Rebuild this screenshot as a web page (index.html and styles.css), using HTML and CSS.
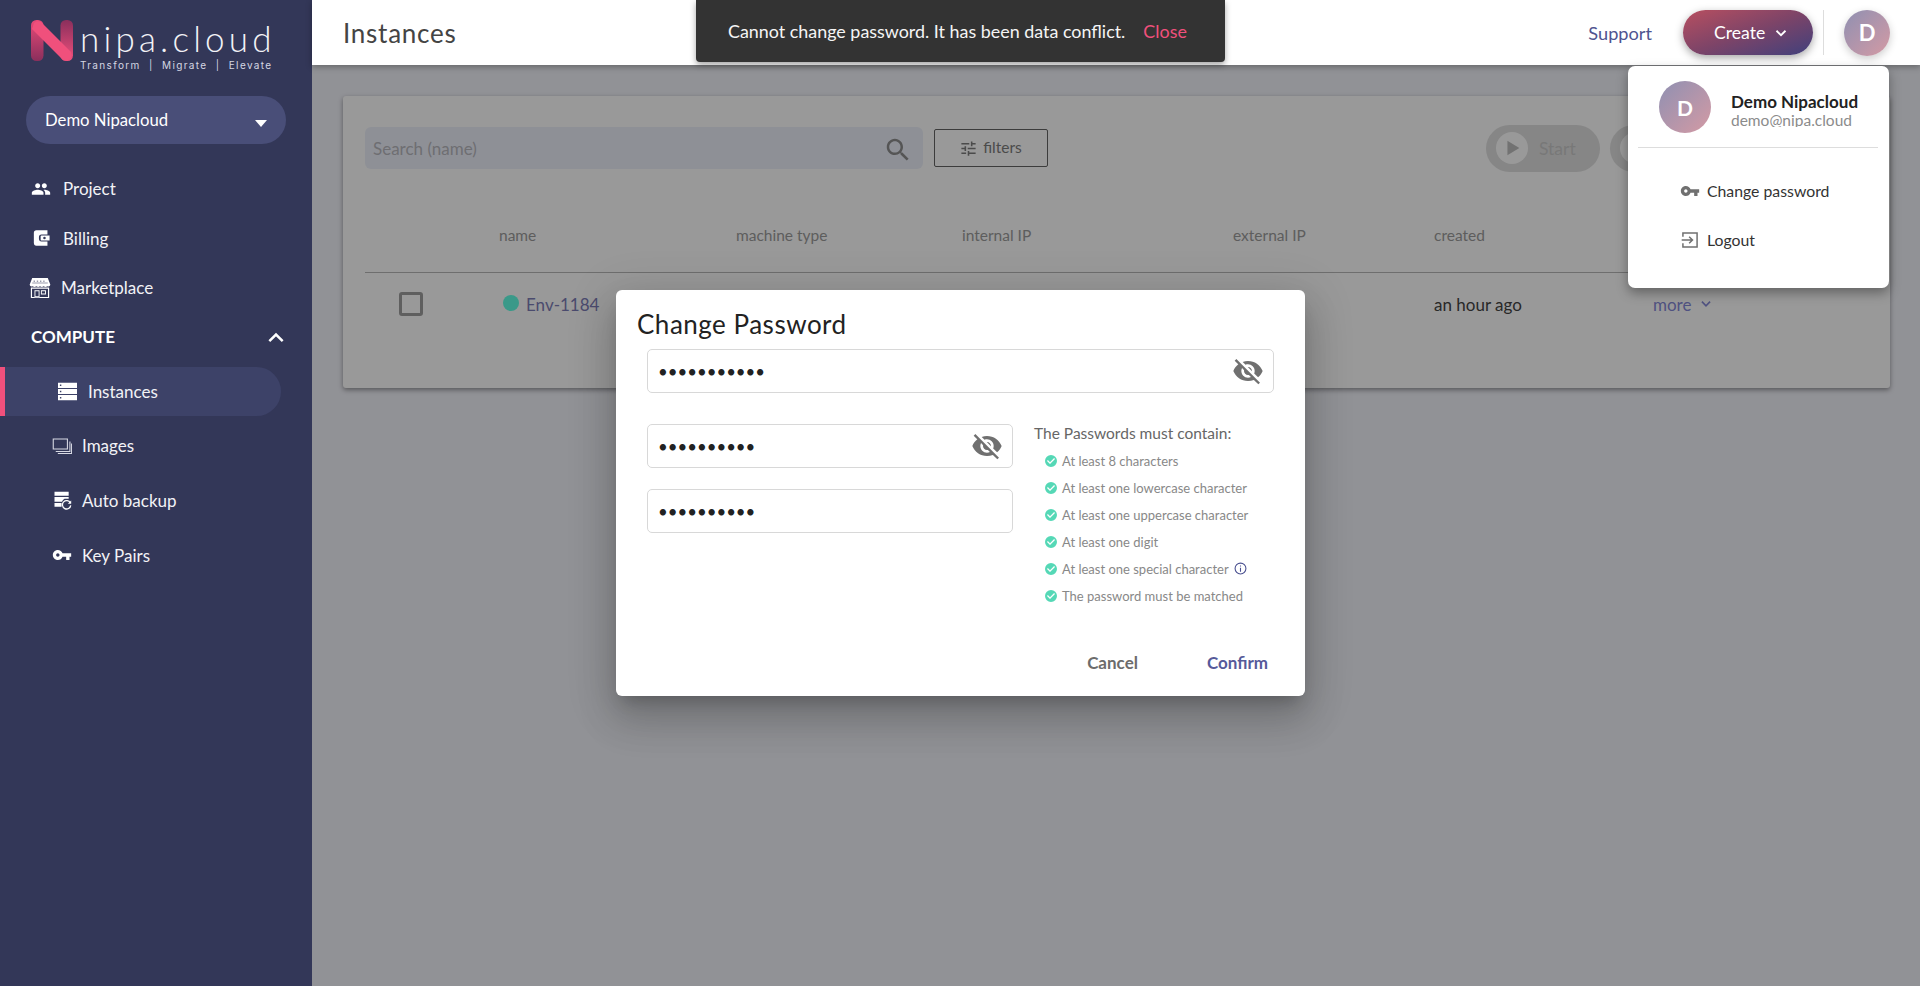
FILE: index.html
```html
<!DOCTYPE html>
<html lang="en">
<head>
<meta charset="utf-8">
<title>Instances - Nipa.Cloud</title>
<link rel="stylesheet" href="styles.css">
</head>
<body>
<div class="app">
  <aside class="sidebar">
    <div class="logo">
      <svg class="logo-mark" viewBox="0 0 42 41" width="42" height="41">
        <defs>
          <linearGradient id="nl" x1="0" y1="0" x2="0" y2="1"><stop offset="0" stop-color="#e94a78"/><stop offset="1" stop-color="#8a2f5c"/></linearGradient>
          <linearGradient id="nr" x1="0" y1="0" x2="0" y2="1"><stop offset="0" stop-color="#8a2f5c"/><stop offset="1" stop-color="#f0507c"/></linearGradient>
        </defs>
        <rect x="0" y="0" width="12.5" height="41" rx="5.5" fill="url(#nl)"/>
        <rect x="29.5" y="0" width="12.5" height="41" rx="5.5" fill="url(#nr)"/>
        <path d="M3 3 Q6 0 10 2 L40 32 Q42 38 37 40 Q33 41 30 38 L1 9 Z" fill="#f0507c"/>
      </svg>
      <div class="logo-text">
        <div class="logo-name">nipa.cloud</div>
        <div class="logo-tag">Transform &nbsp;|&nbsp; Migrate &nbsp;|&nbsp; Elevate</div>
      </div>
    </div>
    <div class="org-select"><span>Demo Nipacloud</span><i class="caret"></i></div>
    <nav class="nav">
      <a class="nav-item nav-project"><svg class="ic" viewBox="0 0 24 24"><path d="M16 11c1.66 0 2.99-1.34 2.99-3S17.66 5 16 5c-1.66 0-3 1.34-3 3s1.34 3 3 3zm-8 0c1.66 0 2.99-1.34 2.99-3S9.66 5 8 5C6.34 5 5 6.34 5 8s1.34 3 3 3zm0 2c-2.33 0-7 1.17-7 3.5V19h14v-2.5c0-2.33-4.67-3.5-7-3.5zm8 0c-.29 0-.62.02-.97.05 1.16.84 1.97 1.97 1.97 3.45V19h6v-2.5c0-2.33-4.67-3.5-7-3.5z"/></svg>Project</a>
      <a class="nav-item nav-billing"><svg class="ic" viewBox="2 3 20 18"><path d="M6 3h13v5h-7a3 3 0 0 0-3 3v2a3 3 0 0 0 3 3h7v5H6a3 3 0 0 1-3-3V6a3 3 0 0 1 3-3z"/><path fill-rule="evenodd" d="M12 9h9.500v6H12a1 1 0 0 1-1-1v-4a1 1 0 0 1 1-1zm3.500 1.500a1.500 1.500 0 1 0 0 3 1.500 1.500 0 0 0 0-3z"/></svg>Billing</a>
      <a class="nav-item nav-market"><svg class="ic ic-lg" viewBox="0 0 24 24"><path d="M3.500 1h17l2.800 7.500a2.400 2.400 0 0 1-3.300 1.600 3 3 0 0 1-4 0 3 3 0 0 1-4 0 3 3 0 0 1-4 0 3 3 0 0 1-4 0A2.400 2.400 0 0 1 .7 8.500z"/><path d="M5 4h1.500v1H5zM8.500 4H10v1H8.500zM12 4h1.500v1H12zM15.500 4H17v1h-1.500zM3.500 6.200h17v.6h-17z" fill="#333758"/><path fill-rule="evenodd" d="M2 11.500h20V23H2zM3.300 12.800V21.700h17.400V12.800zM6 14.500h5.500v7.500H6zM7 15.500V21h3.500v-5.500zM13 14.500h5.500V19H13zM14 15.500V18h3.500v-2.500z"/></svg>Marketplace</a>
      <div class="nav-section"><span>COMPUTE</span><svg class="chev" viewBox="0 0 24 24"><path d="M4 17 L12 9 L20 17" fill="none" stroke="#fff" stroke-width="3"/></svg></div>
      <a class="nav-sub active"><svg class="ic ic-servers" viewBox="2 2.500 20 19.500"><path fill-rule="evenodd" d="M2 3h20v5.500H2zM2 9.500h20V15H2zM2 16h20v5.500H2zM4 5v1.500h1.500V5zM4 11.500V13h1.500v-1.500zM4 18v1.500h1.500V18z"/></svg>Instances</a>
      <a class="nav-sub sub-images"><svg class="ic ic-thin" viewBox="0 0 24 24"><path d="M1.500 3.500h17v12h-17zM4.500 18.500h17V6.500M7 21h16.500V9"/></svg>Images</a>
      <a class="nav-sub sub-backup"><svg class="ic" viewBox="0 0 24 24"><path d="M3 2h17v5H3zM3 8.500h17V10.500h-5a7 7 0 0 0-3 3.500H3zM3 15.500h8.500V20H3z"/><path d="M22 15.500a5 5 0 1 0 .5 3" fill="none" stroke="#fff" stroke-width="1.600"/><path d="M23 12.500v4h-4z"/></svg>Auto backup</a>
      <a class="nav-sub sub-keys"><svg class="ic" viewBox="0 0 24 24"><path d="M12.650 10C11.830 7.670 9.610 6 7 6c-3.310 0-6 2.690-6 6s2.690 6 6 6c2.610 0 4.830-1.670 5.650-4H17v4h4v-4h2v-4H12.650zM7 14c-1.100 0-2-.9-2-2s.9-2 2-2 2 .9 2 2-.9 2-2 2z"/></svg>Key Pairs</a>
    </nav>
  </aside>

  <main class="main">
    <header class="topbar">
      <h1 class="page-title">Instances</h1>
      <div class="topbar-right">
        <a class="support">Support</a>
        <button class="create-btn">Create<svg class="create-chev" viewBox="0 0 24 24"><path d="M6 9 L12 15 L18 9" fill="none" stroke="#fff" stroke-width="2.400"/></svg></button>
        <span class="topbar-divider"></span>
        <span class="avatar avatar-sm">D</span>
      </div>
    </header>

    <section class="content">
      <div class="card">
        <div class="toolbar">
          <div class="search"><span>Search (name)</span><svg class="search-ic" viewBox="0 0 24 24"><path d="M15.500 14h-.79l-.28-.27C15.410 12.590 16 11.110 16 9.500 16 5.910 13.090 3 9.500 3S3 5.910 3 9.500 5.910 16 9.500 16c1.610 0 3.090-.59 4.230-1.570l.27.28v.79l5 4.990L20.490 19l-4.990-5zm-6 0C7.010 14 5 11.990 5 9.500S7.010 5 9.500 5 14 7.010 14 9.500 11.990 14 9.500 14z"/></svg></div>
          <button class="filters"><svg class="tune" viewBox="0 0 24 24"><path d="M3 17v2h6v-2H3zM3 5v2h10V5H3zm10 16v-2h8v-2h-8v-2h-2v6h2zM7 9v2H3v2h4v2h2V9H7zm14 4v-2H11v2h10zm-6-4h2V7h4V5h-4V3h-2v6z"/></svg>filters</button>
          <div class="actions">
            <div class="action"><span class="action-circle"><svg class="play" viewBox="0 0 24 24"><path d="M7 4 L20 12 L7 20 Z"/></svg></span>Start</div>
            <div class="action"><span class="action-circle"></span>Stop</div>
            <div class="action"><span class="action-circle"></span>Reboot</div>
          </div>
        </div>
        <div class="table-row table-head">
          <span></span><span>name</span><span>machine type</span><span>internal IP</span><span>external IP</span><span>created</span>
        </div>
        <div class="table-row table-body">
          <span><i class="checkbox"></i></span>
          <span class="env"><i class="dot"></i>Env-1184</span>
          <span></span><span></span><span></span>
          <span class="created">an hour ago</span>
          <span class="more">more<svg class="more-chev" viewBox="0 0 24 24"><path d="M5 8 L12 15 L19 8" fill="none" stroke="#8589d8" stroke-width="2.800"/></svg></span>
        </div>
      </div>
    </section>

    <div class="backdrop"></div>

    <div class="snackbar">
      <span>Cannot change password. It has been data conflict.</span>
      <a class="snack-close">Close</a>
    </div>

    <div class="user-menu">
      <div class="user-head">
        <span class="avatar avatar-lg">D</span>
        <div class="user-info">
          <div class="user-name">Demo Nipacloud</div>
          <div class="user-mail">demo@nipa.cloud</div>
        </div>
      </div>
      <div class="menu-items">
        <a class="menu-item"><svg class="menu-ic" viewBox="0 0 24 24"><path d="M12.650 10C11.830 7.670 9.610 6 7 6c-3.310 0-6 2.690-6 6s2.690 6 6 6c2.610 0 4.830-1.670 5.650-4H17v4h4v-4h2v-4H12.650zM7 14c-1.100 0-2-.9-2-2s.9-2 2-2 2 .9 2 2-.9 2-2 2z"/></svg>Change password</a>
        <a class="menu-item"><svg class="menu-ic" viewBox="0 0 24 24"><path d="M3.500 8V3.500h17v17h-17V16M2 12h13M11 8l4 4-4 4" fill="none" stroke="#707070" stroke-width="1.800"/></svg>Logout</a>
      </div>
    </div>
  </main>

  <div class="modal">
    <h2 class="modal-title">Change Password</h2>
    <div class="modal-body">
      <label class="field field-wide">
        <input type="password" value="abcdefghijk" aria-label="Current password">
        <svg class="eye" viewBox="0 0 24 24"><path d="M12 7c2.760 0 5 2.240 5 5 0 .65-.13 1.260-.36 1.830l2.920 2.920c1.510-1.260 2.700-2.890 3.430-4.750-1.730-4.390-6-7.500-11-7.500-1.400 0-2.740.25-3.980.7l2.160 2.160C10.740 7.130 11.350 7 12 7zM2 4.270l2.280 2.280.46.46C3.080 8.300 1.780 10.020 1 12c1.730 4.390 6 7.500 11 7.500 1.550 0 3.030-.3 4.380-.84l.42.42L19.730 22 21 20.730 3.270 3 2 4.270zM7.530 9.800l1.550 1.550c-.05.21-.08.43-.08.65 0 1.660 1.340 3 3 3 .22 0 .44-.03.65-.08l1.550 1.550c-.67.33-1.410.53-2.200.53-2.760 0-5-2.240-5-5 0-.79.2-1.530.53-2.200zm4.310-.78l3.150 3.150.02-.16c0-1.660-1.340-3-3-3l-.17.01z"/></svg>
      </label>
      <div class="pw-row">
        <div class="pw-fields">
          <label class="field">
            <input type="password" value="abcdefghij" aria-label="New password">
            <svg class="eye" viewBox="0 0 24 24"><path d="M12 7c2.760 0 5 2.240 5 5 0 .65-.13 1.260-.36 1.830l2.920 2.920c1.510-1.260 2.700-2.890 3.430-4.750-1.730-4.390-6-7.500-11-7.500-1.400 0-2.740.25-3.980.7l2.160 2.160C10.740 7.130 11.350 7 12 7zM2 4.270l2.280 2.280.46.46C3.080 8.300 1.780 10.020 1 12c1.730 4.390 6 7.500 11 7.500 1.550 0 3.030-.3 4.380-.84l.42.42L19.730 22 21 20.730 3.270 3 2 4.270zM7.530 9.800l1.550 1.550c-.05.21-.08.43-.08.65 0 1.660 1.340 3 3 3 .22 0 .44-.03.65-.08l1.550 1.550c-.67.33-1.410.53-2.200.53-2.760 0-5-2.240-5-5 0-.79.2-1.530.53-2.200zm4.310-.78l3.150 3.150.02-.16c0-1.660-1.340-3-3-3l-.17.01z"/></svg>
          </label>
          <label class="field">
            <input type="password" value="abcdefghij" aria-label="Confirm password">
          </label>
        </div>
        <div class="rules">
          <div class="rules-title">The Passwords must contain:</div>
          <ul class="rules-list">
            <li><svg class="ok" viewBox="0 0 24 24"><path d="M12 0a12 12 0 1 0 0 24 12 12 0 0 0 0-24zm-2 18l-6-6 1.800-1.800L10 14.400l8.200-8.200L20 8l-10 10z"/></svg>At least 8 characters</li>
            <li><svg class="ok" viewBox="0 0 24 24"><path d="M12 0a12 12 0 1 0 0 24 12 12 0 0 0 0-24zm-2 18l-6-6 1.800-1.800L10 14.400l8.200-8.200L20 8l-10 10z"/></svg>At least one lowercase character</li>
            <li><svg class="ok" viewBox="0 0 24 24"><path d="M12 0a12 12 0 1 0 0 24 12 12 0 0 0 0-24zm-2 18l-6-6 1.800-1.800L10 14.400l8.200-8.200L20 8l-10 10z"/></svg>At least one uppercase character</li>
            <li><svg class="ok" viewBox="0 0 24 24"><path d="M12 0a12 12 0 1 0 0 24 12 12 0 0 0 0-24zm-2 18l-6-6 1.800-1.800L10 14.400l8.200-8.200L20 8l-10 10z"/></svg>At least one digit</li>
            <li><svg class="ok" viewBox="0 0 24 24"><path d="M12 0a12 12 0 1 0 0 24 12 12 0 0 0 0-24zm-2 18l-6-6 1.800-1.800L10 14.400l8.200-8.200L20 8l-10 10z"/></svg>At least one special character<svg class="info" viewBox="0 0 24 24"><circle cx="12" cy="12" r="10" fill="none" stroke="#4a5090" stroke-width="2"/><path d="M11 10.500h2V18h-2zM11 6.500h2v2h-2z" fill="#4a5090"/></svg></li>
            <li><svg class="ok" viewBox="0 0 24 24"><path d="M12 0a12 12 0 1 0 0 24 12 12 0 0 0 0-24zm-2 18l-6-6 1.800-1.800L10 14.400l8.200-8.200L20 8l-10 10z"/></svg>The password must be matched</li>
          </ul>
        </div>
      </div>
    </div>
    <div class="modal-actions">
      <button class="btn-text btn-cancel">Cancel</button>
      <button class="btn-text btn-confirm">Confirm</button>
    </div>
  </div>
</div>
</body>
</html>
```

FILE: styles.css
```css
* { box-sizing: border-box; }
html, body { margin: 0; height: 100%; overflow: hidden; }
body { font-family: Lato, "Liberation Sans", sans-serif; color: #222; background: #f2f3fa; }
a { text-decoration: none; color: inherit; }
button { font-family: inherit; border: 0; background: none; padding: 0; }

.app { display: flex; height: 986px; position: relative; }

/* Sidebar */
.sidebar { width: 312px; flex: none; background: #333758; color: #fff; display: flex; flex-direction: column; padding-top: 20px; }
.logo { display: flex; margin-left: 31px; align-items: flex-start; gap: 7px; height: 76px; }
.logo-mark { flex: none; }
.logo-text { margin-top: 2px; }
.logo-name { font-size: 35px; font-weight: 300; letter-spacing: 4.2px; line-height: 32px; white-space: nowrap; color: #f2f2f6; }
.logo-tag { font-family: Inter, Lato, sans-serif; font-size: 10px; letter-spacing: 1.35px; line-height: 14px; margin-top: 4px; white-space: nowrap; color: #d5d6e2; }
.org-select { margin-left: 26px; width: 260px; height: 48px; border-radius: 24px; background: #494e78; display: flex; align-items: center; justify-content: space-between; padding: 0 20px 0 19px; font-size: 16.700px; flex: none; }
.caret { border-left: 6.5px solid transparent; border-right: 6.5px solid transparent; border-top: 7px solid #fff; margin-top: 6px; margin-right: -1px; }
.nav { display: flex; flex-direction: column; margin-top: 20px; }
.nav-item, .nav-sub { display: flex; align-items: center; font-size: 17px; color: #f2f2f6; }
.nav-item { height: 49.500px; padding-left: 31px; gap: 12px; flex: none; }
.ic { width: 20px; height: 20px; fill: #fff; flex: none; }
.ic-lg { width: 22px; height: 22px; }
.nav-market { padding-left: 29px; gap: 10px; }
.nav-billing svg { width: 17px; height: 16px; margin: 0 1px 0 2px; }
.nav-section { height: 48px; display: flex; align-items: center; justify-content: space-between; padding: 0 26px 0 31px; font-size: 17px; font-weight: 700; flex: none; }
.chev { width: 20px; height: 20px; }
.nav-sub { height: 49px; gap: 10px; padding-left: 52px; margin-top: 6px; flex: none; }
.nav-sub.active { width: 281px; background: #3d4268; border-left: 5px solid #f0507c; border-radius: 0 25px 25px 0; padding-left: 53px; margin-top: 6.500px; margin-bottom: 5.750px; gap: 11px; }
.ic-servers { width: 19px; height: 19px; }
.nav-sub .ic-thin { fill: none; stroke: #d8d9e4; stroke-width: 1.300; }
.sub-images { height: 48px; margin-top: 0; }

/* Main */
.main { flex: 1; display: flex; flex-direction: column; position: relative; min-width: 0; }
.topbar { height: 65px; flex: none; background: #fff; display: flex; align-items: center; justify-content: space-between; padding: 0 30px 0 31px; box-shadow: 0 2px 6px rgba(0,0,0,.3); position: relative; z-index: 3; }
.page-title { margin: 0; font-size: 26px; font-weight: 400; letter-spacing: .75px; color: #444; }
.topbar-right { display: flex; align-items: center; }
.support { font-size: 18.200px; color: #4f5490; margin-right: 31px; }
.create-btn { width: 130px; height: 45px; border-radius: 23px; color: #fff; font-size: 17.600px; background: linear-gradient(160deg, #b84f60 0%, #7d4468 50%, #40407c 100%); box-shadow: 0 3px 8px rgba(0,0,0,.35); display: flex; align-items: center; justify-content: flex-start; gap: 7px; padding-left: 31px; }
.create-chev { width: 18px; height: 18px; }
.topbar-divider { width: 1px; height: 45px; background: #ddd; margin: 0 20px 0 10px; }
.avatar { display: flex; align-items: center; justify-content: center; border-radius: 50%; color: #fff; font-weight: 700; background: linear-gradient(135deg, #8f90b2 0%, #d49aa4 100%); }
.avatar-sm { width: 46px; height: 46px; font-size: 22px; box-shadow: 0 3px 8px rgba(0,0,0,.2); }
.avatar-lg { width: 52px; height: 52px; font-size: 21px; flex: none; }

.content { flex: 1; padding: 31px 30px 0 31px; }
.card { height: 292px; background: #fff; border-radius: 3px; box-shadow: 0 2px 5px rgba(0,0,0,.4); padding: 0 22px; }
.toolbar { display: flex; align-items: center; height: 73px; padding-top: 31px; }
.search { width: 558px; height: 42px; background: #edf1fb; border-radius: 6px; display: flex; align-items: center; justify-content: space-between; padding: 0 10px 0 8px; font-size: 17px; color: #b8b8be; }
.search-ic { width: 30px; height: 30px; fill: #8e8e8e; margin-top: 3px; }
.filters { width: 114px; height: 38px; margin-left: 11px; border: 1px solid #646464; border-radius: 2px; display: flex; align-items: center; justify-content: center; gap: 5px; padding: 0 0 3px; font-size: 15.500px; color: #7d7d7d; }
.tune { width: 19px; height: 19px; fill: #7d7d7d; margin: 3px 0 0 -1px; }
.actions { margin-left: auto; display: flex; gap: 10px; margin-right: 20px; }
.action { width: 114px; height: 47px; border-radius: 24px; background: #e0e0e0; display: flex; align-items: center; gap: 11px; padding-left: 10px; font-size: 17.500px; color: #c8c8c8; }
.action-circle { width: 32px; height: 32px; border-radius: 50%; background: #fff; display: flex; align-items: center; justify-content: center; flex: none; }
.play { width: 22px; height: 22px; fill: #bfbfbf; }
.table-row { display: grid; grid-template-columns: 134px 237px 226px 271px 201px 219px 1fr; align-items: center; }
.table-head { height: 104px; padding-top: 28px; font-size: 15.500px; color: #9c9c9c; border-bottom: 1px solid #b8b8b8; }
.table-body { height: 62px; font-size: 17px; }
.checkbox { display: block; width: 24px; height: 24px; border: 3px solid #9e9e9e; border-radius: 3px; margin-left: 34px; }
.env { display: flex; align-items: center; gap: 7px; color: #7d7db7; white-space: nowrap; }
.dot { width: 16px; height: 16px; border-radius: 50%; background: #62ffe4; margin-left: 4px; position: relative; top: -1px; }
.created { color: #444; white-space: nowrap; }
.more { color: #8589d8; display: flex; align-items: center; gap: 8px; }
.more-chev { width: 14px; height: 14px; }

.backdrop { position: absolute; left: 0; right: 0; top: 65px; bottom: 0; background: rgba(0,0,0,.4); z-index: 1; }

.snackbar { position: absolute; left: 384px; top: 0; width: 529px; height: 62px; background: #333; border-radius: 0 0 4px 4px; box-shadow: 0 3px 6px rgba(0,0,0,.35); display: flex; align-items: center; padding: 0 0 0 32px; font-size: 17.900px; color: #f5f5f5; z-index: 4; gap: 18px; }
.snack-close { color: #f0507c; }

.user-menu { position: absolute; left: 1316px; top: 66px; width: 261px; height: 222px; background: #fff; border-radius: 7px; box-shadow: 0 5px 12px rgba(0,0,0,.35); z-index: 4; padding: 15px 11px 0 10px; }
.user-head { display: flex; gap: 20px; height: 67px; padding-left: 21px; border-bottom: 1px solid #ddd; }
.user-info { padding-top: 10px; }
.user-name { font-size: 17px; font-weight: 700; color: #222; line-height: 21px; }
.user-mail { font-size: 15.500px; color: #8b8b8b; line-height: 20px; height: 17px; overflow: hidden; position: relative; top: -2px; }
.menu-items { display: flex; flex-direction: column; margin-top: 18px; padding-left: 42px; }
.menu-item { display: flex; align-items: center; height: 49px; gap: 7px; font-size: 15.800px; color: #333; }
.menu-ic { width: 20px; height: 20px; fill: #707070; flex: none; }

/* Modal */
.modal { position: absolute; left: 616px; top: 290px; width: 689px; height: 406px; background: #fff; border-radius: 6px; box-shadow: 0 11px 15px -7px rgba(0,0,0,.2), 0 24px 38px 3px rgba(0,0,0,.14), 0 9px 46px 8px rgba(0,0,0,.12); z-index: 2; padding: 18px 21px 0; }
.modal-title { margin: 0; font-size: 26px; font-weight: 400; letter-spacing: .5px; line-height: 32px; color: #222; }
.modal-body { padding: 9px 10px 0; }
.field { display: flex; align-items: center; height: 44px; border: 1px solid #d8d8d8; border-radius: 5px; padding: 0 9px 0 10px; }
.field input { flex: 1; min-width: 0; border: 0; outline: 0; padding: 0; background: none; font-family: Lato, sans-serif; font-size: 16.800px; color: #222; height: 100%; }
.eye { width: 32px; height: 32px; fill: #707070; flex: none; }
.pw-row { display: flex; margin-top: 31px; }
.pw-fields { width: 366px; display: flex; flex-direction: column; gap: 21px; flex: none; }
.rules { margin-left: 21px; color: #666; }
.rules-title { font-size: 15.500px; line-height: 20px; margin-top: -1px; }
.rules-list { list-style: none; margin: 4px 0 0; padding: 0 0 0 11px; font-size: 13px; color: #888; }
.rules-list li { display: flex; align-items: center; height: 27px; gap: 5px; white-space: nowrap; }
.ok { width: 12px; height: 12px; fill: #55d8b6; flex: none; }
.info { width: 13px; height: 13px; flex: none; }
.modal-actions { position: absolute; left: 0; right: 0; bottom: 16px; display: flex; justify-content: flex-end; gap: 69px; padding-right: 37px; }
.btn-text { font-size: 17px; font-weight: 700; line-height: 34px; }
.btn-cancel { color: #6c6c6c; }
.btn-confirm { color: #565a9a; }
```
